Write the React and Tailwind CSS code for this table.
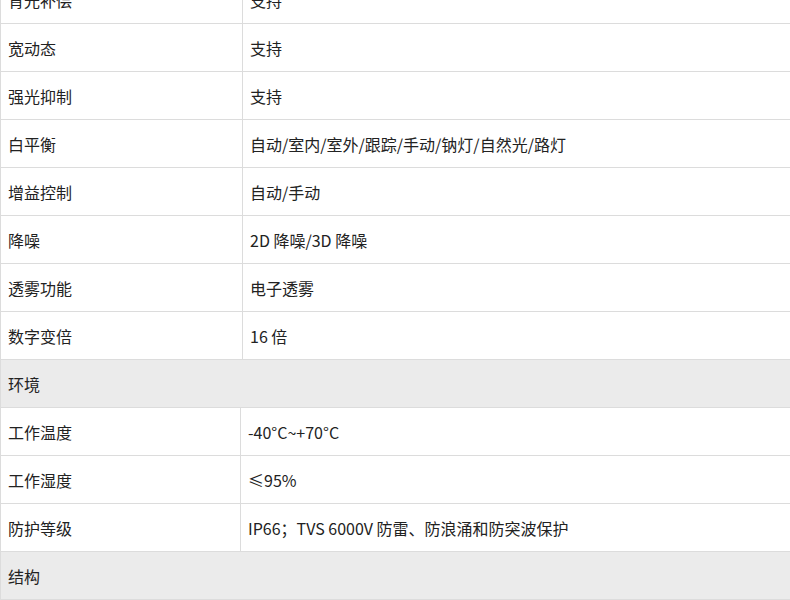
import React from 'react';

const imageRows = [
  ['背光补偿', '支持'],
  ['宽动态', '支持'],
  ['强光抑制', '支持'],
  ['白平衡', '自动/室内/室外/跟踪/手动/钠灯/自然光/路灯'],
  ['增益控制', '自动/手动'],
  ['降噪', '2D 降噪/3D 降噪'],
  ['透雾功能', '电子透雾'],
  ['数字变倍', '16 倍'],
];

const envRows = [
  ['工作温度', '-40°C~+70°C'],
  ['工作湿度', '≤95%'],
  ['防护等级', 'IP66；TVS 6000V 防雷、防浪涌和防突波保护'],
];

function Row({ label, value, leftWidth }) {
  return (
    <div className="flex h-[48px] border-b border-[#dcdcdc]">
      <div className={`${leftWidth} shrink-0 flex items-center pl-[7px] border-r border-[#dcdcdc]`}>{label}</div>
      <div className="flex-1 flex items-center pl-[7px]">{value}</div>
    </div>
  );
}

function Section({ title }) {
  return (
    <div className="h-[48px] flex items-center pl-[7px] bg-[#ebebeb] border-b border-[#dcdcdc]">
      {title}
    </div>
  );
}

export default function App() {
  return (
    <div className="h-[600px] overflow-hidden bg-white text-[16px] text-[#222]" style={{ fontFamily: '"Noto Sans CJK SC", "Noto Sans", sans-serif' }}>
      <div className="-mt-[24px] border-l border-[#dcdcdc]">
        {imageRows.map(([l, v]) => (
          <Row key={l} label={l} value={v} leftWidth="w-[242px]" />
        ))}
        <Section title="环境" />
        {envRows.map(([l, v]) => (
          <Row key={l} label={l} value={v} leftWidth="w-[240px]" />
        ))}
        <Section title="结构" />
      </div>
    </div>
  );
}
